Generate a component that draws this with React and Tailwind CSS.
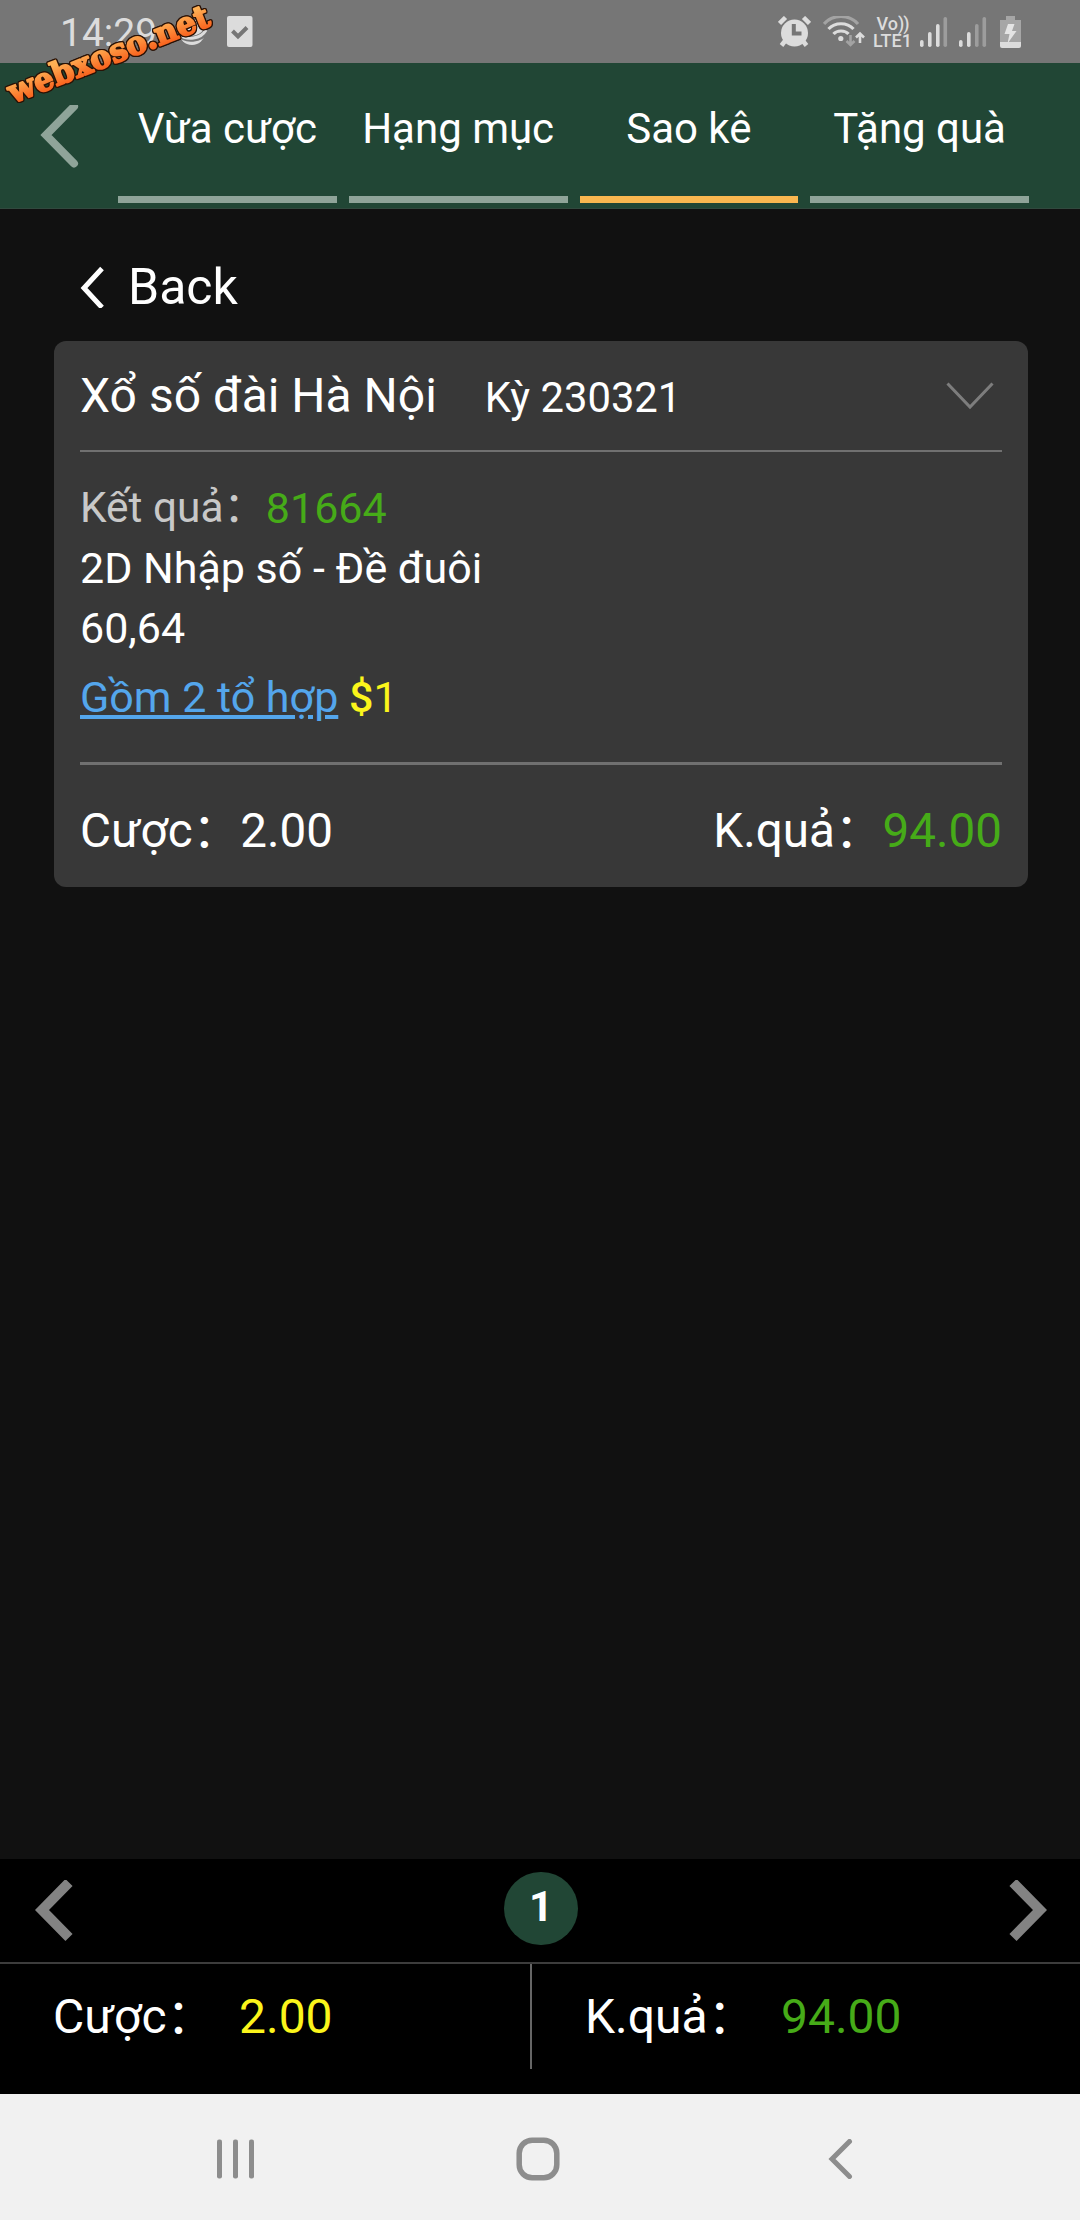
const tabs = [
  { label: "Vừa cược", active: false },
  { label: "Hạng mục", active: false },
  { label: "Sao kê", active: true },
  { label: "Tặng quà", active: false },
];

function StatusBar() {
  return (
    <div className="flex h-[63px] items-center justify-between bg-[#767676] pl-[60px] pr-[59px] text-[#dcdcdc]">
      <div className="flex items-center">
        <span className="w-[117px] pt-[3px] text-[39px] leading-[60px]">
          14:29
        </span>

        <svg className="h-8 w-8" viewBox="0 0 32 32">
          <circle cx="15" cy="16" r="13" fill="currentColor" />
          <path
            d="M2 17C8 26 24 24 29 15"
            fill="none"
            stroke="#767676"
            strokeWidth="6"
          />
          <path
            d="M2 18C10 25 24 23 29 14"
            fill="none"
            stroke="currentColor"
            strokeWidth="3"
          />
        </svg>

        <svg className="ml-[18px] h-[31px] w-[26px]" viewBox="0 0 26 31">
          <rect width="25.5" height="31" rx="2" fill="currentColor" />
          <path
            d="M5.5 15L11 20.5L20 11.5"
            fill="none"
            stroke="#767676"
            strokeWidth="4"
          />
        </svg>
      </div>

      <div className="flex items-center">
        <svg className="h-8 w-[33px]" viewBox="0 0 33 32">
          <g stroke="currentColor" strokeWidth="4.5">
            <path d="M1.5 7.5L7.5 1.5M25.5 1.5L31.5 7.5M7 25L3.5 29.5M25 25L28.5 29.5" />
          </g>
          <circle cx="16.5" cy="17" r="13.5" fill="currentColor" />
          <path
            d="M15.8 8V17.5H23.5"
            fill="none"
            stroke="#767676"
            strokeWidth="4"
          />
        </svg>

        <svg className="ml-3 h-8 w-[42px]" viewBox="0 0 42 32" fill="none">
          <g strokeWidth="3.2">
            <path d="M1 8C10 -2 26 -2 35 8" stroke="#a3a3a3" />
            <path d="M5.5 13C12 6 24 6 30.5 13" stroke="currentColor" />
            <path d="M10.5 18C14 14 22 14 25.5 18" stroke="currentColor" />
          </g>
          <circle cx="17.8" cy="22.5" r="2.6" fill="currentColor" />
          <path
            d="M27.5 19V27M23.5 25L27.5 29L31.5 25"
            stroke="#a3a3a3"
            strokeWidth="2.6"
          />
          <path
            d="M37 27V19M33 21.5L37 17.5L41 21.5"
            stroke="currentColor"
            strokeWidth="2.6"
          />
        </svg>

        <p className="ml-[7px] w-[41px] pt-px text-center text-[18px] font-medium leading-[17px]">
          Vo<span className="-tracking-[1px]">))</span>
          <br />
          LTE1
        </p>

        <svg className="ml-[7px] h-8 w-[28px]" viewBox="0 0 28 32">
          <g fill="currentColor">
            <rect x="0" y="24" width="3.6" height="7" rx="1.8" />
            <rect x="8" y="16" width="3.6" height="15" rx="1.8" />
            <rect x="16" y="8" width="3.6" height="23" rx="1.8" />
            <rect x="23.5" y="1" width="3.6" height="30" rx="1.8" fill="#9d9d9d" />
          </g>
        </svg>

        <svg className="ml-[11px] h-8 w-[28px]" viewBox="0 0 28 32">
          <g fill="currentColor">
            <rect x="0" y="24" width="3.6" height="7" rx="1.8" />
            <rect x="8" y="16" width="3.6" height="15" rx="1.8" />
            <rect x="16" y="8" width="3.6" height="23" rx="1.8" fill="#9d9d9d" />
            <rect x="23.5" y="1" width="3.6" height="30" rx="1.8" fill="#9d9d9d" />
          </g>
        </svg>

        <svg className="ml-[13px] h-8 w-[21px]" viewBox="0 0 21 32">
          <path d="M6 0H15V4H21V27H0V4H6Z" fill="#a6a6a6" />
          <path d="M0 26H21V30Q21 32 19 32H2Q0 32 0 30Z" fill="currentColor" />
          <path d="M8 8H14.5L12 15H16.5L7.5 27.5L9.5 18H4.5Z" fill="#e4e4e4" />
        </svg>
      </div>
    </div>
  );
}

function Watermark() {
  return (
    <svg
      className="pointer-events-none absolute left-0 top-0 overflow-visible [filter:drop-shadow(1px_0_0_#2a1206)_drop-shadow(-1px_0_0_#2a1206)_drop-shadow(0_1px_0_#2a1206)_drop-shadow(0_-1px_0_#2a1206)]"
      width="240"
      height="120"
      viewBox="0 0 240 120"
    >
      <defs>
        <linearGradient id="orange" x1="0" y1="0" x2="0" y2="1">
          <stop offset="0.25" stopColor="#ffb054" />
          <stop offset="0.8" stopColor="#f9651f" />
        </linearGradient>
      </defs>
      <text
        transform="translate(13 103.5) rotate(-21.5)"
        textLength="214"
        lengthAdjust="spacingAndGlyphs"
        fill="url(#orange)"
        stroke="url(#orange)"
        strokeWidth="1.8"
        strokeLinejoin="round"
        className="font-['DejaVu_Serif',serif] text-[32px] font-bold"
      >
        webxoso.net
      </text>
    </svg>
  );
}

function Header() {
  return (
    <header className="flex h-[146px] border-b border-[#31493e] bg-[#214635] pr-[51px]">
      <div className="w-[118px] pl-10 pt-[42px]">
        <svg className="h-[66px] w-10" viewBox="0 0 40 66">
          <path
            d="M34 1.5L6 30L34 58.5"
            fill="none"
            stroke="#8fa499"
            strokeWidth="8"
            strokeLinecap="round"
          />
        </svg>
      </div>

      <nav className="grid flex-1 grid-cols-4 gap-3">
        {tabs.map((tab) => (
          <div key={tab.label} className="pt-9 text-center">
            <div className="text-[42px] leading-[60px] text-white">
              {tab.label}
            </div>
            <div
              className={
                tab.active
                  ? "mt-[37px] h-[7px] bg-[#fab750]"
                  : "mt-[37px] h-[7px] bg-[#8fa499]"
              }
            />
          </div>
        ))}
      </nav>
    </header>
  );
}

function TicketCard() {
  return (
    <section className="rounded-xl bg-[#383838] px-[26px] text-[43px] leading-[60px] text-white">
      <div className="box-content flex h-[109px] items-center justify-between border-b-2 border-[#707070]">
        <div className="flex items-baseline pt-0.5">
          <span className="text-[48px]">Xổ số đài Hà Nội</span>
          <span className="ml-12 text-[41.8px]">Kỳ 230321</span>
        </div>
        <svg className="mb-0.5 mr-2 h-[30px] w-[48px]" viewBox="0 0 48 30">
          <path
            d="M1.5 3.5L24 27L46.5 3.5"
            fill="none"
            stroke="#7d7d7d"
            strokeWidth="3"
          />
        </svg>
      </div>

      <div className="pb-[35px] pt-[26px]">
        <p className="flex h-[60px]">
          <span className="text-[42.4px] text-[#c8c8c8]">Kết quả：</span>
          <span className="text-[#46ab18]">81664</span>
        </p>
        <p>2D Nhập số - Đề đuôi</p>
        <p>60,64</p>
        <p className="mt-[9px]">
          <a className="text-[#54a6ec] underline">Gồm 2 tổ hợp</a>{" "}
          <span className="text-[#fbf51b]">
            <span className="font-medium">$</span>1
          </span>
        </p>
      </div>

      <div className="flex h-[125px] items-center justify-between border-t-[3px] border-[#707070] pt-[9px] text-[47.6px]">
        <span>Cược：2.00</span>
        <span>
          K.quả：<span className="text-[#46ab18]">94.00</span>
        </span>
      </div>
    </section>
  );
}

function Pager() {
  return (
    <div className="flex h-[103px] items-center justify-between px-[33px]">
      <svg className="h-[62px] w-10" viewBox="0 0 40 62">
        <path d="M36 2.5L9 30L36 57.5" fill="none" stroke="#838383" strokeWidth="10" />
      </svg>
      <div className="mb-1 ml-0.5 flex h-[73px] w-[74px] items-center justify-center rounded-full bg-[#214635] text-[42px] font-bold leading-[72px] text-white">
        <span className="-mt-1">1</span>
      </div>
      <svg className="h-[62px] w-10" viewBox="0 0 40 62">
        <path d="M6 2.5L33 30L6 57.5" fill="none" stroke="#838383" strokeWidth="10" />
      </svg>
    </div>
  );
}

function Summary() {
  return (
    <div className="flex h-[132px] border-t-2 border-[#3c3c3c] text-[48px] text-white">
      <div className="flex h-[105px] w-[532px] items-center border-r-2 border-[#666] pl-[53px]">
        <span className="w-[186px]">Cược：</span>
        <span className="text-[#fbf51b]">2.00</span>
      </div>
      <div className="flex h-[105px] flex-1 items-center pl-[53px]">
        <span className="w-[196px]">K.quả：</span>
        <span className="text-[#46ab18]">94.00</span>
      </div>
    </div>
  );
}

function NavBar() {
  return (
    <div className="flex h-[126px] items-center bg-[#f1f1f1] pl-[217px]">
      <svg className="mt-1 h-10 w-[38px]" viewBox="0 0 38 40">
        <g fill="#8d8d8d">
          <rect x="0" y="0.5" width="5" height="39" rx="2" />
          <rect x="16" y="0.5" width="5" height="39" rx="2" />
          <rect x="32" y="0.5" width="5" height="39" rx="2" />
        </g>
      </svg>
      <svg className="ml-[261px] mt-1 h-11 w-11" viewBox="0 0 44 44">
        <rect
          x="3.2"
          y="3.2"
          width="37.6"
          height="37.6"
          rx="13"
          fill="none"
          stroke="#8d8d8d"
          strokeWidth="5.5"
        />
      </svg>
      <svg className="ml-[268px] mt-1 h-10 w-7" viewBox="0 0 28 40">
        <path
          d="M21.5 2.5L4 20L21.5 37.5"
          fill="none"
          stroke="#8d8d8d"
          strokeWidth="5"
          strokeLinecap="round"
        />
      </svg>
    </div>
  );
}

export default function App() {
  return (
    <div className="relative flex h-[2220px] w-[1080px] flex-col overflow-hidden bg-[#111] font-['Roboto','Noto_Sans_CJK_SC',sans-serif]">
      <StatusBar />
      <Header />

      <main className="flex-1 pl-[54px] pr-[52px] pt-12">
        <div className="mb-6 flex h-[60px] items-center pl-[26px] text-[50px] leading-[60px] text-white">
          <svg className="h-[42px] w-[26px]" viewBox="0 0 26 42">
            <path d="M22 2.5L4 22L22 41.5" fill="none" stroke="#fff" strokeWidth="5" />
          </svg>
          <span className="ml-[22px]">Back</span>
        </div>
        <TicketCard />
      </main>

      <footer className="bg-black">
        <Pager />
        <Summary />
      </footer>
      <NavBar />
      <Watermark />
    </div>
  );
}
